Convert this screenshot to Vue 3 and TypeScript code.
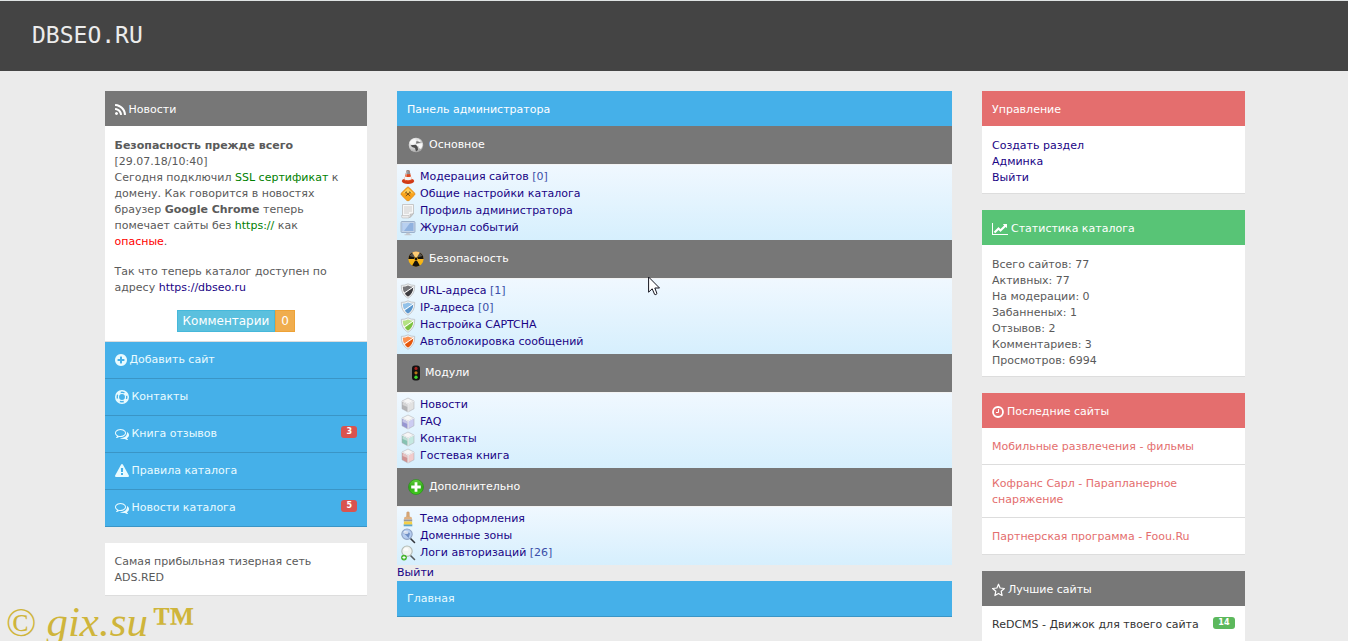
<script setup lang="ts">
interface Glyph {
  box: string
  width: number
  path?: string
}

const glyphs: Record<string, Glyph> = {
  rss: {
    box: '192 0 1408 1792',
    width: 11,
    path: 'M576 1344q0 80-56 136t-136 56-136-56-56-136 56-136 136-56 136 56 56 136zm512 123q2 28-17 48-18 21-47 21h-135q-25 0-43-16.5t-20-41.5q-22-229-184.5-391.5t-391.5-184.5q-25-2-41.5-20t-16.5-43v-135q0-29 21-47 17-17 43-17h5q160 13 306 80.5t259 181.5q114 113 181.5 259t80.5 306zm512 2q2 27-18 47-18 20-46 20h-143q-26 0-44.5-17.5t-19.5-42.5q-12-215-101-408.5t-231.5-336-336-231.5-408.5-102q-25-1-42.5-19.5t-17.5-43.5v-143q0-28 20-46 18-18 44-18h3q262 13 501.5 120t425.5 294q187 186 294 425.5t120 501.5z',
  },
  plus: {
    box: '128 0 1536 1792',
    width: 12,
    path: 'M1344 960v-128q0-26-19-45t-45-19h-256v-256q0-26-19-45t-45-19h-128q-26 0-45 19t-19 45v256h-256q-26 0-45 19t-19 45v128q0 26 19 45t45 19h256v256q0 26 19 45t45 19h128q26 0 45-19t19-45v-256h256q26 0 45-19t19-45zm320-64q0 209-103 385.5t-279.5 279.5-385.5 103-385.5-103-279.5-279.5-103-385.5 103-385.5 279.5-279.5 385.5-103 385.5 103 279.5 279.5 103 385.5z',
  },
  ring: { box: '0 0 1792 1792', width: 14 },
  comments: {
    box: '0 0 1792 1792',
    width: 14,
    path: 'M704 384q-153 0-286 52t-211.5 141-78.5 191q0 82 53 158t149 132l97 56-35 84q34-20 62-39l44-31 53 10q78 14 153 14 153 0 286-52t211.5-141 78.5-191-78.5-191-211.5-141-286-52zm0-128q191 0 353.5 68.5t256.5 186.5 94 257-94 257-256.5 186.5-353.5 68.5q-86 0-176-16-124 88-278 128-36 9-86 16h-3q-11 0-20.5-8t-11.5-21q-1-3-1-6.5t.5-6.5 2-6l2.5-5 3.5-5.5 4-5 4.5-5 4-4.5q5-6 23-25t26-29.5 22.5-29 25-38.5 20.5-44q-124-72-195-177t-71-224q0-139 94-257t256.5-186.5 353.5-68.5zm822 1169q10 24 20.5 44t25 38.5 22.5 29 26 29.5 23 25q1 1 4 4.5t4.5 5 4 5 3.5 5.5l2.5 5 2 6 .5 6.5-1 6.5q-3 14-13 22t-22 7q-50-7-86-16-154-40-278-128-90 16-176 16-271 0-472-132 58 4 88 4 161 0 309-45t264-129q125-92 192-212t67-254q0-77-23-152 129 71 204 178t75 230q0 120-71 224.5t-195 176.5z',
  },
  warning: {
    box: '0 0 1792 1792',
    width: 14,
    path: 'M1024 1375v-190q0-14-9.5-23.5t-22.5-9.5h-192q-13 0-22.5 9.5t-9.5 23.5v190q0 14 9.5 23.5t22.5 9.5h192q13 0 22.5-9.5t9.5-23.5zm-2-374l18-459q0-12-10-19-13-11-24-11h-220q-11 0-24 11-10 7-10 21l17 457q0 10 10 16.5t24 6.5h185q14 0 23.5-6.5t10.5-16.5zm-14-934l768 1408q35 63-2 126-17 29-46.5 46t-63.5 17h-1536q-34 0-63.5-17t-46.5-46q-37-63-2-126l768-1408q17-31 47-49t65-18 65 18 47 49z',
  },
  chart: {
    box: '0 0 2048 1792',
    width: 16,
    path: 'M2048 1536v128h-2048v-1536h128v1408h1920zm-128-1248v435q0 21-19.5 29.5t-35.5-7.5l-121-121-633 633q-10 10-23 10t-23-10l-233-233-416 416-192-192 585-585q10-10 23-10t23 10l233 233 464-464-121-121q-16-16-7.5-35.5t29.5-19.5h435q14 0 23 9t9 23z',
  },
}

const menu = [
  { icon: 'plus', label: 'Добавить сайт', count: '' },
  { icon: 'ring', label: 'Контакты', count: '' },
  { icon: 'comments', label: 'Книга отзывов', count: '3' },
  { icon: 'warning', label: 'Правила каталога', count: '' },
  { icon: 'comments', label: 'Новости каталога', count: '5' },
]

interface Entry {
  icon: string
  label: string
  count?: string
  light?: string
  dark?: string
}

const sections: { icon: string; title: string; entries: Entry[] }[] = [
  {
    icon: 'globe',
    title: 'Основное',
    entries: [
      { icon: 'cone', label: 'Модерация сайтов', count: '0' },
      { icon: 'sign', label: 'Общие настройки каталога' },
      { icon: 'script', label: 'Профиль администратора' },
      { icon: 'monitor', label: 'Журнал событий' },
    ],
  },
  {
    icon: 'radiation',
    title: 'Безопасность',
    entries: [
      { icon: 'shield', label: 'URL-адреса', count: '1', light: '#77777b', dark: '#3c3c40' },
      { icon: 'shield', label: 'IP-адреса', count: '0', light: '#92c1e8', dark: '#5b96cc' },
      { icon: 'shield', label: 'Настройка CAPTCHA', light: '#b4e283', dark: '#7cc142' },
      { icon: 'shield', label: 'Автоблокировка сообщений', light: '#fb9150', dark: '#e4560c' },
    ],
  },
  {
    icon: 'traffic',
    title: 'Модули',
    entries: [
      { icon: 'cube', label: 'Новости', light: '#e2e2e2', dark: '#b4b4b6' },
      { icon: 'cube', label: 'FAQ', light: '#ccccf2', dark: '#9696d2' },
      { icon: 'cube', label: 'Контакты', light: '#c4e8e0', dark: '#86c2b2' },
      { icon: 'cube', label: 'Гостевая книга', light: '#f2cccc', dark: '#d09292' },
    ],
  },
  {
    icon: 'add',
    title: 'Дополнительно',
    entries: [
      { icon: 'brush', label: 'Тема оформления' },
      { icon: 'lens', label: 'Доменные зоны' },
      { icon: 'lensAdd', label: 'Логи авторизаций', count: '26' },
    ],
  },
]

const controls = ['Создать раздел', 'Админка', 'Выйти']

const stats = [
  { name: 'Всего сайтов', value: 77 },
  { name: 'Активных', value: 77 },
  { name: 'На модерации', value: 0 },
  { name: 'Забанненых', value: 1 },
  { name: 'Отзывов', value: 2 },
  { name: 'Комментариев', value: 3 },
  { name: 'Просмотров', value: 6994 },
]

const latest = [
  'Мобильные развлечения - фильмы',
  'Кофранс Сарл - Парапланерное снаряжение',
  'Партнерская программа - Foou.Ru',
]
</script>

<template>
  <div class="page">
    <header class="top">
      <a class="logo" href="#">DBSEO.RU</a>
    </header>

    <main class="content">
      <div class="grid">
        <aside class="side">
          <section>
            <h2 class="head gray">
              <svg class="glyph" :viewBox="glyphs.rss.box" :width="glyphs.rss.width" height="14"><path :d="glyphs.rss.path" /></svg>Новости
            </h2>
            <div class="body news">
              <p>
                <b>Безопасность прежде всего</b><br />[29.07.18/10:40]<br />Сегодня подключил
                <span class="ok">SSL сертификат</span> к домену. Как говорится в новостях браузер
                <b>Google Chrome</b> теперь помечает сайты без <span class="ok">https://</span> как<br />
                <span class="bad">опасные</span>.
              </p>
              <p>Так что теперь каталог доступен по адресу <a href="#">https://dbseo.ru</a></p>
              <div class="buttons">
                <a class="btn info" href="#">Комментарии</a><a class="btn amber" href="#">0</a>
              </div>
            </div>
            <nav>
              <a v-for="item in menu" :key="item.label" class="menu-item" href="#">
                <svg class="glyph" :viewBox="glyphs[item.icon].box" :width="glyphs[item.icon].width" height="14">
                  <path v-if="glyphs[item.icon].path" :d="glyphs[item.icon].path" />
                  <g v-else fill="none" stroke="currentColor">
                    <circle cx="896" cy="896" r="800" stroke-width="190" />
                    <circle cx="896" cy="896" r="450" stroke-width="150" />
                    <circle cx="896" cy="896" r="640" stroke-width="300" stroke-dasharray="480 525" stroke-dashoffset="-262" />
                  </g>
                </svg>
                <span class="grow">{{ item.label }}</span>
                <span v-if="item.count" class="badge red">{{ item.count }}</span>
              </a>
            </nav>
          </section>
          <section class="site">Самая прибыльная тизерная сеть ADS.RED</section>
        </aside>

        <section class="center">
          <h1 class="head blue">Панель администратора</h1>
          <template v-for="section in sections" :key="section.title">
            <h2 class="section-head">
              <svg v-if="section.icon === 'globe'" width="16" height="16" viewBox="0 0 16 16">
                <defs>
                  <radialGradient id="globe-fill" cx=".35" cy=".3" r=".8"><stop offset="0" stop-color="#fff" /><stop offset=".6" stop-color="#c9c9c9" /><stop offset="1" stop-color="#9a9a9a" /></radialGradient>
                </defs>
                <circle cx="8" cy="8" r="7.3" fill="url(#globe-fill)" />
                <path d="M1.5 5Q4 2 7 2.2L8.5 4 6 5.5 5.5 7 3 7.5zM8 7.2L14.5 6Q15.2 9 13 12L11 11 10.5 9 8.5 9zM9.5 2L13 4 11 5z" fill="#f8f8f8" />
                <path d="M2.6 8.3L8 7.8 9.7 10 10 13 8 14.5 7 11 4 10z" fill="#4e4e4e" />
                <path d="M8.5 4L13 5.4 8 6.8z" fill="#777" />
              </svg>
              <svg v-else-if="section.icon === 'radiation'" width="16" height="16" viewBox="0 0 16 16">
                <defs>
                  <linearGradient id="rad-fill" x1="0" y1="0" x2="0" y2="1"><stop offset="0" stop-color="#ffb84a" /><stop offset="1" stop-color="#f2b400" /></linearGradient>
                </defs>
                <circle cx="8" cy="8" r="7.6" fill="url(#rad-fill)" />
                <path d="M8 8H.4A7.6 7.6 0 0 1 4.2 1.4zM8 8L11.8 1.4A7.6 7.6 0 0 1 15.6 8zM8 8L11.8 14.6A7.6 7.6 0 0 1 4.2 14.6z" fill="#17130c" />
                <circle cx="8" cy="8" r="2" fill="#f3b21c" /><circle cx="8" cy="8" r="1.4" fill="#17130c" />
                <path d="M1.5 5Q4 1 8 .8Q12 1 14.5 5Q8 7.5 1.5 5z" fill="#fff" opacity=".28" />
              </svg>
              <svg v-else-if="section.icon === 'traffic'" width="12" height="16" viewBox="0 0 12 16">
                <rect x="4" y=".5" width="8" height="15" rx="3" fill="#111" />
                <circle cx="8" cy="3.4" r="1.6" fill="#a3201c" />
                <circle cx="8" cy="7.8" r="1.6" fill="#b77516" />
                <circle cx="8" cy="12.2" r="1.7" fill="#3fd52c" />
              </svg>
              <svg v-else width="16" height="16" viewBox="0 0 16 16">
                <defs>
                  <linearGradient id="add-fill" x1="0" y1="0" x2="0" y2="1"><stop offset="0" stop-color="#63d33e" /><stop offset=".5" stop-color="#2fa816" /><stop offset="1" stop-color="#43cf1f" /></linearGradient>
                </defs>
                <circle cx="8" cy="8" r="7.5" fill="url(#add-fill)" stroke="#1f8a12" stroke-width=".6" />
                <path d="M6.6 3.2h2.8v3.4h3.4v2.8H9.4v3.4H6.6V9.4H3.2V6.6h3.4z" fill="#fff" />
              </svg>
              {{ section.title }}
            </h2>
            <ul class="entries">
              <li v-for="entry in section.entries" :key="entry.label">
                <svg width="16" height="16" viewBox="0 0 16 16">
                  <g v-if="entry.icon === 'cone'">
                    <path d="M1.8 12.3Q1.8 10.4 4 10H12Q14.2 10.4 14.2 12.3Q13 15 8 15T1.8 12.3z" fill="#cf3a17" />
                    <path d="M6.6 1.6Q8 .6 9.4 1.6L12 11.2Q8 13.6 4 11.2z" fill="#e0481d" />
                    <path d="M6.6 1.6Q8 .6 9.4 1.6L10.3 4.8Q8 5.8 5.7 4.8z" fill="#8e9297" />
                    <path d="M5 7.4Q8 8.8 11 7.4L11.8 10.3Q8 12.2 4.2 10.3z" fill="#f3f3f3" />
                    <path d="M7 2.2L5.4 11.4" stroke="#fff" stroke-width=".8" opacity=".55" />
                  </g>
                  <g v-else-if="entry.icon === 'sign'">
                    <path d="M8 1Q8.6 1 9.2 1.6L14.6 7Q15.4 8 14.6 9L9.2 14.4Q8 15.3 6.8 14.4L1.4 9Q.6 8 1.4 7L6.8 1.6Q7.4 1 8 1z" fill="#f9a31c" stroke="#dc8411" stroke-width=".7" />
                    <path d="M2.4 7.5L8 2 13.6 7.5Q8 6 2.4 7.5z" fill="#ffd05c" />
                    <path d="M5.8 6.2L10.2 10M10.2 6.2L5.8 10M5.2 7L6.6 5.7M10.8 7L9.4 5.7" stroke="#6b4614" stroke-width=".9" fill="none" />
                  </g>
                  <g v-else-if="entry.icon === 'script'">
                    <path d="M2.5 1.5H13.5V10.5L10 14.5H2.5z" fill="#f7f7f7" stroke="#bcbcbc" stroke-width=".8" />
                    <path d="M4 4h8M4 6h8M4 8h8M4 10h5" stroke="#c3c3c3" stroke-width=".8" />
                    <path d="M13.5 10.5L10 14.5V11.2z" fill="#d0d0d0" stroke="#aaa" stroke-width=".5" />
                    <path d="M1.5 12.5H9V15H3Q1.5 15 1.5 13.5z" fill="#ececec" stroke="#bcbcbc" stroke-width=".6" />
                  </g>
                  <g v-else-if="entry.icon === 'monitor'">
                    <rect x="1" y="1.5" width="14" height="11" rx="1" fill="#c6d5e8" stroke="#8fa5c0" stroke-width=".8" />
                    <rect x="2.5" y="3" width="11" height="8" fill="#90b2df" />
                    <path d="M2.5 3H10L4 11H2.5z" fill="#b8d0f0" />
                    <path d="M6.5 12.8h3l.5 1.4h1.5v1h-7v-1H6z" fill="#c3c8cf" />
                  </g>
                  <g v-else-if="entry.icon === 'shield'">
                    <path d="M8 .8Q11 2.5 14.7 2.4Q15.2 11 8 15.3Q.8 11 1.3 2.4Q5 2.5 8 .8z" fill="#f4f4f4" stroke="#b9bcc0" stroke-width=".8" />
                    <path d="M8 2.5Q10.5 3.8 13.2 3.8Q13.2 10 8 13.6Q2.8 10 2.8 3.8Q5.5 3.8 8 2.5z" :fill="entry.light" />
                    <path d="M13.2 4.4Q13 10 8 13.6Q6.2 12.4 5 10.8z" :fill="entry.dark" />
                    <path d="M4 10.2L13 4.2" stroke="#fff" stroke-width="1" />
                  </g>
                  <g v-else-if="entry.icon === 'cube'" stroke="#a9a9ae" stroke-width=".5" stroke-linejoin="round">
                    <path d="M8 1L14 4 8 7.2 2 4z" fill="#f6f6f6" />
                    <path d="M2 4L8 7.2V15L2 11.8z" :fill="entry.dark" />
                    <path d="M14 4L8 7.2V15L14 11.8z" :fill="entry.light" />
                    <path d="M2.6 5L7.5 7.6V10L2.6 8z" fill="#fff" opacity=".45" stroke="none" />
                    <path d="M8 7.2L14 4M8 7.2L2 4M8 7.2V15" stroke="#fff" stroke-width=".8" />
                  </g>
                  <g v-else-if="entry.icon === 'brush'">
                    <path d="M6.8 1.3Q8 .2 9.2 1.3L9.4 6H6.6z" fill="#d9a878" stroke="#b88756" stroke-width=".4" />
                    <path d="M4.5 6Q8 5 11.5 6L12.2 8.6H3.8z" fill="#e0b080" />
                    <path d="M3.8 8.5h8.4v2H3.8z" fill="#989898" />
                    <path d="M4 10.5h8l.3 3.2H3.7z" fill="#f6cf45" />
                    <path d="M3.7 13.5h8.6v1.8H3.7z" fill="#5ea5ca" />
                  </g>
                  <g v-else>
                    <path d="M10.5 10.5L14.5 14.5" :stroke="entry.icon === 'lens' ? '#33373d' : '#55595d'" stroke-width="1.6" stroke-linecap="round" />
                    <circle cx="7" cy="6.2" r="5.2" :fill="entry.icon === 'lens' ? '#b5cdf0' : '#f0f3f0'" :stroke="entry.icon === 'lens' ? '#8fa3c4' : '#b4bbb4'" stroke-width="1.1" />
                    <path v-if="entry.icon === 'lens'" d="M3 5L7 3 10 5.5 8.5 10 5.8 7z" fill="#6f8ec4" />
                    <ellipse cx="6" cy="4.4" rx="2.6" ry="1.6" fill="#fff" opacity=".7" />
                    <g v-if="entry.icon === 'lensAdd'">
                      <circle cx="4" cy="12.6" r="2.9" fill="#45b52a" />
                      <path d="M4 11v3.2M2.4 12.6h3.2" stroke="#fff" stroke-width="1" />
                    </g>
                  </g>
                </svg>
                <a href="#">{{ entry.label }} <span v-if="entry.count" class="count">[{{ entry.count }}]</span></a>
              </li>
            </ul>
          </template>
          <a class="exit" href="#">Выйти</a>
          <a class="menu-item home" href="#">Главная</a>
        </section>

        <aside class="side">
          <section>
            <h2 class="head red">Управление</h2>
            <div class="body">
              <a v-for="name in controls" :key="name" class="line" href="#">{{ name }}</a>
            </div>
          </section>
          <section>
            <h2 class="head green">
              <svg class="glyph" :viewBox="glyphs.chart.box" :width="glyphs.chart.width" height="14"><path :d="glyphs.chart.path" /></svg>Статистика каталога
            </h2>
            <div class="body">
              <div v-for="row in stats" :key="row.name">{{ row.name }}: {{ row.value }}</div>
            </div>
          </section>
          <section>
            <h2 class="head red">
              <svg class="glyph" width="12" height="14" viewBox="0 0 12 14">
                <g fill="none" stroke="currentColor"><circle cx="6" cy="7" r="5" stroke-width="1.8" /><path d="M6.5 4v3.5H4" stroke-width="1" /></g>
              </svg>Последние сайты
            </h2>
            <a v-for="site in latest" :key="site" class="site pink" href="#">{{ site }}</a>
          </section>
          <section>
            <h2 class="head gray">
              <svg class="glyph" width="13" height="14" viewBox="0 0 13 14">
                <path d="M6.5 1.2L8.1 5l4.3.5-3.2 2.8.9 4.2-3.6-2.1-3.6 2.1.9-4.2L.6 5.5l4.3-.5z" fill="none" stroke="currentColor" stroke-width="1.2" stroke-linejoin="round" />
              </svg>Лучшие сайты
            </h2>
            <a class="site best" href="#"><span class="grow">ReDCMS - Движок для твоего сайта</span><span class="badge lime">14</span></a>
          </section>
        </aside>
      </div>
    </main>

    <div class="watermark"><span>©</span><i>gix.su</i><b>™</b></div>
    <svg class="cursor" width="12" height="20" viewBox="0 0 12 20" aria-hidden="true">
      <path d="M.6 1V16.2L4.2 12.8 6.6 18.4Q7.8 19.2 9 17.6L6.8 12H11.5z" fill="#fff" stroke="#15151f" stroke-width="1" />
    </svg>
  </div>
</template>

<style>
body {
  margin: 0;
  background: #ebebeb;
}
</style>

<style scoped>
.page {
  position: relative;
  height: 100vh;
  overflow: hidden;
  font: 11px/16px Verdana, 'DejaVu Sans', sans-serif;
  color: #5a5a5a;
}

a {
  color: #1a0485;
  text-decoration: none;
}

h1,
h2,
p,
ul {
  margin: 0;
  padding: 0;
  font-size: 11px;
  font-weight: normal;
  list-style: none;
}

.top {
  display: flex;
  align-items: center;
  box-sizing: border-box;
  height: 71px;
  padding: 0 32px 2px;
  background: #444;
  border-top: 1px solid #dfe3e4;
}

.logo {
  font: 23px/26px 'DejaVu Sans Mono', monospace;
  color: #ececec;
}

.content {
  padding: 20px 15px 0 16px;
}

.grid {
  display: grid;
  grid-template-columns: repeat(4, minmax(0, 1fr));
  gap: 30px;
  align-items: start;
  max-width: 1140px;
  margin: 0 auto;
}

.side {
  display: flex;
  flex-direction: column;
  gap: 16px;
}

.center {
  grid-column: span 2;
}

.head {
  display: flex;
  align-items: center;
  padding: 11px 10px 8px;
  color: #fff;
}

.gray,
.section-head {
  background: #777;
}

.blue {
  background: #45b0e9;
}

.red {
  background: #e46e6e;
}

.green {
  background: #58c476;
}

.glyph {
  flex: none;
  margin-right: 3px;
  fill: currentColor;
}

.body {
  padding: 12px 10px 7px;
  background: #fff;
  border-bottom: 1px solid #ddd;
}

.news p + p {
  margin-top: 14px;
}

.ok {
  color: #008000;
}

.bad {
  color: #f00;
}

.buttons {
  display: flex;
  justify-content: center;
  margin: 14px 0 2px;
}

.btn {
  padding: 0 5px;
  border: 1px solid;
  font-size: 12px;
  line-height: 20px;
  color: #fff;
}

.info {
  background: #5bc0de;
  border-color: #46b8da;
}

.amber {
  background: #f0ad4e;
  border-color: #eea236;
}

.menu-item {
  display: flex;
  align-items: center;
  padding: 10px;
  background: #45b0e9;
  border-bottom: 1px solid #3a95c6;
  color: #e9fbff;
}

.home {
  padding-bottom: 9px;
}

.grow {
  flex: 1;
}

.badge {
  align-self: flex-start;
  padding: 0 5px;
  border-radius: 3px;
  font-size: 8px;
  font-weight: bold;
  line-height: 12px;
  color: #fff;
}

.badge.red {
  background: #d9534f;
}

.lime {
  background: #5cb85c;
}

.section-head {
  display: flex;
  align-items: center;
  gap: 5px;
  padding: 11px;
  color: #fff;
}

.entries {
  padding: 3px 3px 4px;
  border-top: 1px solid #f3f3f3;
  background: linear-gradient(#f0f8ff, #d6effd);
}

.entries li {
  display: flex;
  align-items: center;
  gap: 4px;
  height: 17px;
}

.count {
  color: #3a4fa8;
}

.exit,
.line {
  display: block;
}

.site {
  display: flex;
  padding: 11px 10px 9px;
  background: #fff;
  border-bottom: 1px solid #ddd;
}

.pink {
  color: #e46e6e;
}

.best {
  color: #333;
}

.watermark {
  position: absolute;
  left: 6px;
  bottom: 0;
  display: flex;
  align-items: baseline;
  font: 40px/36px 'Liberation Serif', serif;
  color: #cfb53b;
  pointer-events: none;
}

.watermark i {
  margin: 0 4px 0 10px;
  font-size: 43px;
}

.watermark b {
  font-size: 43px;
}

.cursor {
  position: absolute;
  left: 648px;
  top: 276px;
}
</style>
